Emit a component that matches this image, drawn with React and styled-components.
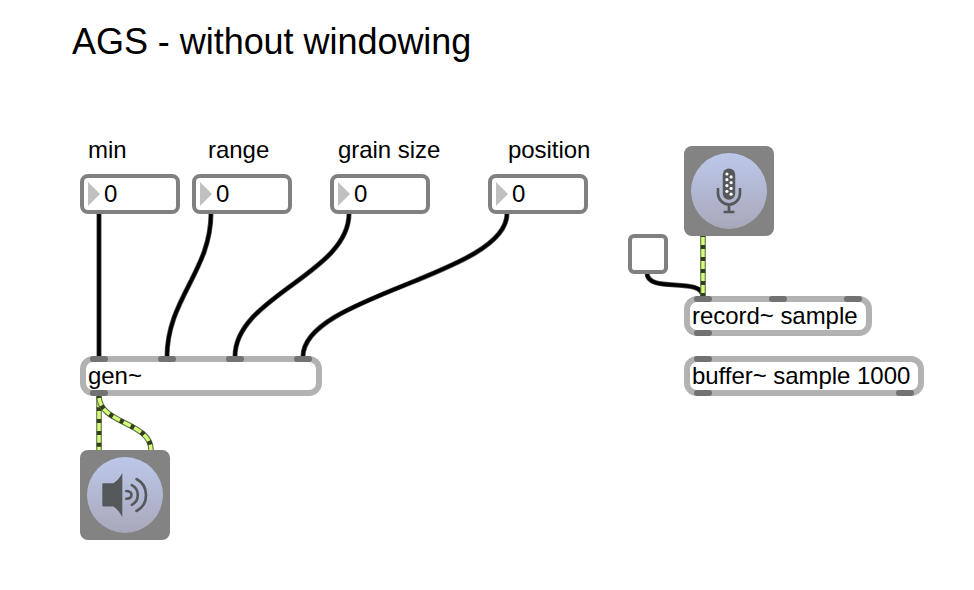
import React from "react";
import styled, { createGlobalStyle } from "styled-components";

const GlobalStyle = createGlobalStyle`
  html, body { margin: 0; background: #fff; }
  body { font-family: "Liberation Sans", Arial, sans-serif; color: #000; overflow: hidden; }
`;

const Patcher = styled.main`
  position: relative;
  width: 974px;
  height: 590px;
  overflow: hidden;
  background: #fff;
  letter-spacing: -0.04px;
`;

const Node = styled.div`
  position: absolute;
  left: ${(p) => p.$x}px;
  top: ${(p) => p.$y}px;
  box-sizing: border-box;
`;

const Title = styled(Node).attrs({ as: "h1" })`
  margin: 0;
  font-size: 36px;
  font-weight: 400;
  line-height: 42px;
  white-space: nowrap;
`;

const Comment = styled(Node)`
  font-size: 24px;
  line-height: 28px;
  white-space: nowrap;
`;

const NumberFrame = styled(Node)`
  display: flex;
  align-items: center;
  gap: 4px;
  width: 100px;
  height: 40px;
  padding-left: 4px;
  border: 4px solid #808080;
  border-radius: 8px;
  background: #fff;
  font-size: 24px;
  line-height: 28px;
`;

const Arrow = styled.span`
  width: 12px;
  height: 24px;
  background: #c0c0c0;
  clip-path: polygon(0 0, 100% 50%, 0 100%);
`;

const ObjectFrame = styled(Node)`
  display: flex;
  align-items: center;
  width: ${(p) => p.$w}px;
  height: 40px;
  padding-left: 2px;
  border: 6px solid #b2b2b2;
  border-radius: 13px;
  background: #fff;
  font-size: 24px;
  line-height: 28px;
  white-space: nowrap;
`;

const Port = styled.i`
  position: absolute;
  left: ${(p) => p.$at - 6}px;
  ${(p) => (p.$out ? "bottom" : "top")}: -6px;
  width: 18px;
  height: 6px;
  border-radius: 3px;
  background: #727272;
`;

const Toggle = styled(Node)`
  width: 40px;
  height: 40px;
  border: 4px solid #808080;
  border-radius: 6px;
  background: #fff;
`;

const AudioButton = styled(Node)`
  display: flex;
  align-items: center;
  justify-content: center;
  width: 90px;
  height: 90px;
  border-radius: 8px;
  background: #838383;
`;

const Disc = styled.div`
  width: 76px;
  height: 76px;
  border-radius: 50%;
  background: linear-gradient(#bcc8ea, #a8a8ba);

  svg { display: block; }
`;

const Cords = styled.svg`
  position: absolute;
  inset: 0;
`;

function cordPath([x1, y1, x2, y2, bend]) {
  return `M${x1} ${y1}C${x1} ${y1 + bend} ${x2} ${y2 - bend} ${x2} ${y2}`;
}

const controlCords = [
  [99, 213, 99, 357, 55],
  [211, 213, 167, 357, 58],
  [349, 213.5, 235, 356.5, 60],
  [507, 213.5, 303, 356.5, 61],
  [647, 273, 703, 297, 21],
];

const signalCords = [
  [99, 397, 99, 452, 20],
  [99, 396, 151, 450, 28],
  [703, 235, 703, 296, 20],
];

function ControlCord({ points }) {
  const d = cordPath(points);
  return (
    <g fill="none">
      <path d={d} stroke="#555" strokeWidth="5" />
      <path d={d} stroke="#000" strokeWidth="3.6" />
    </g>
  );
}

function SignalCord({ points }) {
  const d = cordPath(points);
  return (
    <g fill="none">
      <path d={d} stroke="#5f7040" strokeWidth="5.6" />
      <path d={d} stroke="#d4ff7c" strokeWidth="3.4" />
      <path d={d} stroke="#343d20" strokeWidth="4.6" strokeDasharray="4 8" strokeDashoffset="2" />
    </g>
  );
}

function NumberBox({ x, y, value }) {
  return (
    <NumberFrame $x={x} $y={y}>
      <Arrow />
      <span>{value}</span>
    </NumberFrame>
  );
}

function ObjectBox({ x, y, width, inlets = [], outlets = [], children }) {
  return (
    <ObjectFrame $x={x} $y={y} $w={width}>
      {inlets.map((at) => <Port key={at} $at={at} />)}
      {outlets.map((at) => <Port key={at} $at={at} $out />)}
      <span>{children}</span>
    </ObjectFrame>
  );
}

const micHoles = [[35.9, 21], [40.1, 23.9], [35.9, 26.7], [40.1, 29.6], [35.9, 32.6], [40.1, 35.4], [35.9, 38.3], [40.1, 41.2]];

function MicIcon() {
  return (
    <svg width="76" height="76" viewBox="0 0 76 76">
      <rect x="31.8" y="15.4" width="12.4" height="31.4" rx="6.2" fill="#55585a" />
      {micHoles.map(([x, y]) => <circle key={y} cx={x} cy={y} r="1.6" fill="#fff" />)}
      <path d="M27 35v5.5a11 11 0 0 0 22 0V35M38 51.5v7M32.6 59h10.8" fill="none" stroke="#55585a" strokeWidth="2.6" />
    </svg>
  );
}

function SpeakerIcon() {
  return (
    <svg width="76" height="76" viewBox="0 0 76 76">
      <path d="M16.3 26.3H26.5Q32 22.6 35.3 16V60Q32 53.4 26.5 49.4H16.3Q15.3 49.4 15.3 48.4V27.3Q15.3 26.3 16.3 26.3Z" fill="#55585a" />
      <g fill="none" stroke="#55585a" strokeWidth="2.6" strokeLinecap="round">
        <path d="M39.3 34q5.2 .4 5.2 3.9t-5.2 3.9" />
        <path d="M44.8 28.2a11 11 0 0 1 0 19.6" />
        <path d="M49.5 22a18.2 18.2 0 0 1 0 32" />
      </g>
    </svg>
  );
}

export default function App() {
  return (
    <>
      <GlobalStyle />
      <Patcher>
        <Cords width="974" height="590">
          {controlCords.map((c) => <ControlCord key={c.join()} points={c} />)}
          {signalCords.map((c) => <SignalCord key={c.join()} points={c} />)}
        </Cords>

        <Title $x={72} $y={21}>AGS - without windowing</Title>

        <Comment $x={88} $y={136}>min</Comment>
        <Comment $x={208} $y={136}>range</Comment>
        <Comment $x={338} $y={136}>grain size</Comment>
        <Comment $x={508} $y={136}>position</Comment>

        <NumberBox x={80} y={174} value={0} />
        <NumberBox x={192} y={174} value={0} />
        <NumberBox x={330} y={174} value={0} />
        <NumberBox x={488} y={174} value={0} />

        <ObjectBox x={80} y={356} width={242} inlets={[10, 78, 146, 214]} outlets={[10]}>gen~</ObjectBox>
        <ObjectBox x={684} y={296} width={188} inlets={[10, 85, 160]} outlets={[10]}>record~ sample</ObjectBox>
        <ObjectBox x={684} y={356} width={240} inlets={[10]} outlets={[10, 212]}>buffer~ sample 1000</ObjectBox>

        <Toggle $x={628} $y={234} />
        <AudioButton $x={684} $y={146}>
          <Disc><MicIcon /></Disc>
        </AudioButton>
        <AudioButton $x={80} $y={450}>
          <Disc><SpeakerIcon /></Disc>
        </AudioButton>
      </Patcher>
    </>
  );
}
